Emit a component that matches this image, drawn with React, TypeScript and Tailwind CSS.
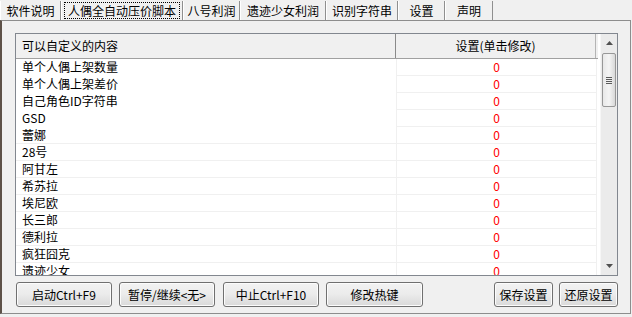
import React from 'react';

const tabs = [
  { label: '软件说明', w: 61 },
  { label: '人偶全自动压价脚本', w: 122, active: true },
  { label: '八号利润', w: 57 },
  { label: '遗迹少女利润', w: 86 },
  { label: '识别字符串', w: 72 },
  { label: '设置', w: 47 },
  { label: '声明', w: 48 },
];

const rows = [
  '单个人偶上架数量',
  '单个人偶上架差价',
  '自己角色ID字符串',
  'GSD',
  '蕾娜',
  '28号',
  '阿甘左',
  '希苏拉',
  '埃尼欧',
  '长三郎',
  '德利拉',
  '疯狂囧克',
  '遗迹少女',
];

function Btn({ label, w }: { label: string; w: string }) {
  return (
    <button
      className={`${w} h-[25px] rounded-[3px] border border-[#707070] bg-gradient-to-b from-[#f3f3f3] via-[#ebebeb] to-[#d9d9d9] text-[12px] leading-none text-black shadow-[inset_0_0_0_1px_#fcfcfc]`}
    >
      {label}
    </button>
  );
}

export default function App() {
  return (
    <div className="w-[632px] h-[317px] bg-[#f0f0f0] flex flex-col overflow-hidden text-[12px] text-black font-['Noto_Sans_CJK_SC',sans-serif]">
      {/* tab strip */}
      <div className="h-[20px] flex items-stretch pt-[1px]">
        {tabs.map((t) => (
          <div
            key={t.label}
            style={{ width: t.w }}
            className="flex items-center justify-center border-r border-r-[#8f8f8f] border-l border-l-white shrink-0"
          >
            {t.active ? (
              <span className="px-[3px] h-[17px] leading-[15px] border border-dotted border-black">{t.label}</span>
            ) : (
              <span className="leading-[17px]">{t.label}</span>
            )}
          </div>
        ))}
      </div>

      {/* tab panel */}
      <div className="h-[294px] mr-[1px] border border-[#8d8d8d] border-l-[#5d5148] border-l-2 flex flex-col">
        {/* list box */}
        <div className="ml-[13px] mt-[12px] w-[603px] h-[243px] border border-[#82878f] bg-white flex overflow-hidden">
          <div className="w-[583px] flex flex-col">
            <div className="h-[25px] flex bg-[#f0f0f0] border-b border-[#a0a0a0] shrink-0">
              <div className="w-[380px] border-r border-[#8a8a8a] flex items-center pl-[6px]">可以自定义的内容</div>
              <div className="w-[200px] border-r border-[#b4b4b4] flex items-center justify-center">设置(单击修改)</div>
            </div>
            {rows.map((r, i) => (
              <div key={r} className="h-[17px] flex shrink-0">
                <div
                  className={`w-[381px] border-r border-[#f0f0f0] pl-[6px] leading-[16px] ${
                    i >= 4 ? 'border-b border-b-[#f0f0f0]' : ''
                  }`}
                >
                  {r}
                </div>
                <div className="w-[200px] border-r border-b border-[#f0f0f0] text-center leading-[16px] text-[#ff0000]">0</div>
              </div>
            ))}
          </div>
          {/* scrollbar */}
          <div className="ml-[2px] w-[17px] bg-[#ebebeb] border-l border-[#f6f6f6] flex flex-col items-center">
            <div className="h-[18px] w-full flex items-center justify-center">
              <svg width="7" height="4" viewBox="0 0 7 4"><path d="M3.5 0L7 4H0z" fill="#505050" /></svg>
            </div>
            <div className="w-[14px] h-[54px] mt-[1px] rounded-[2px] border border-[#979797] bg-gradient-to-r from-[#e8e8e8] via-[#f4f4f4] to-[#d8d8d8] flex flex-col items-center justify-center gap-[1px]">
              <div className="w-[6px] h-[1px] bg-[#5a5a5a]" />
              <div className="w-[6px] h-[1px] bg-[#5a5a5a]" />
              <div className="w-[6px] h-[1px] bg-[#5a5a5a]" />
              <div className="w-[6px] h-[1px] bg-[#5a5a5a]" />
            </div>
            <div className="flex-1" />
            <div className="h-[18px] w-full flex items-center justify-center">
              <svg width="7" height="4" viewBox="0 0 7 4"><path d="M0 0H7L3.5 4z" fill="#505050" /></svg>
            </div>
          </div>
        </div>

        {/* buttons */}
        <div className="flex mt-[6px] ml-[14px]">
          <Btn label="启动Ctrl+F9" w="w-[96px]" />
          <div className="w-[7px]" />
          <Btn label="暂停/继续<无>" w="w-[96px]" />
          <div className="w-[8px]" />
          <Btn label="中止Ctrl+F10" w="w-[96px]" />
          <div className="w-[7px]" />
          <Btn label="修改热键" w="w-[97px]" />
          <div className="w-[71px]" />
          <Btn label="保存设置" w="w-[59px]" />
          <div className="w-[6px]" />
          <Btn label="还原设置" w="w-[59px]" />
        </div>
      </div>
    </div>
  );
}
